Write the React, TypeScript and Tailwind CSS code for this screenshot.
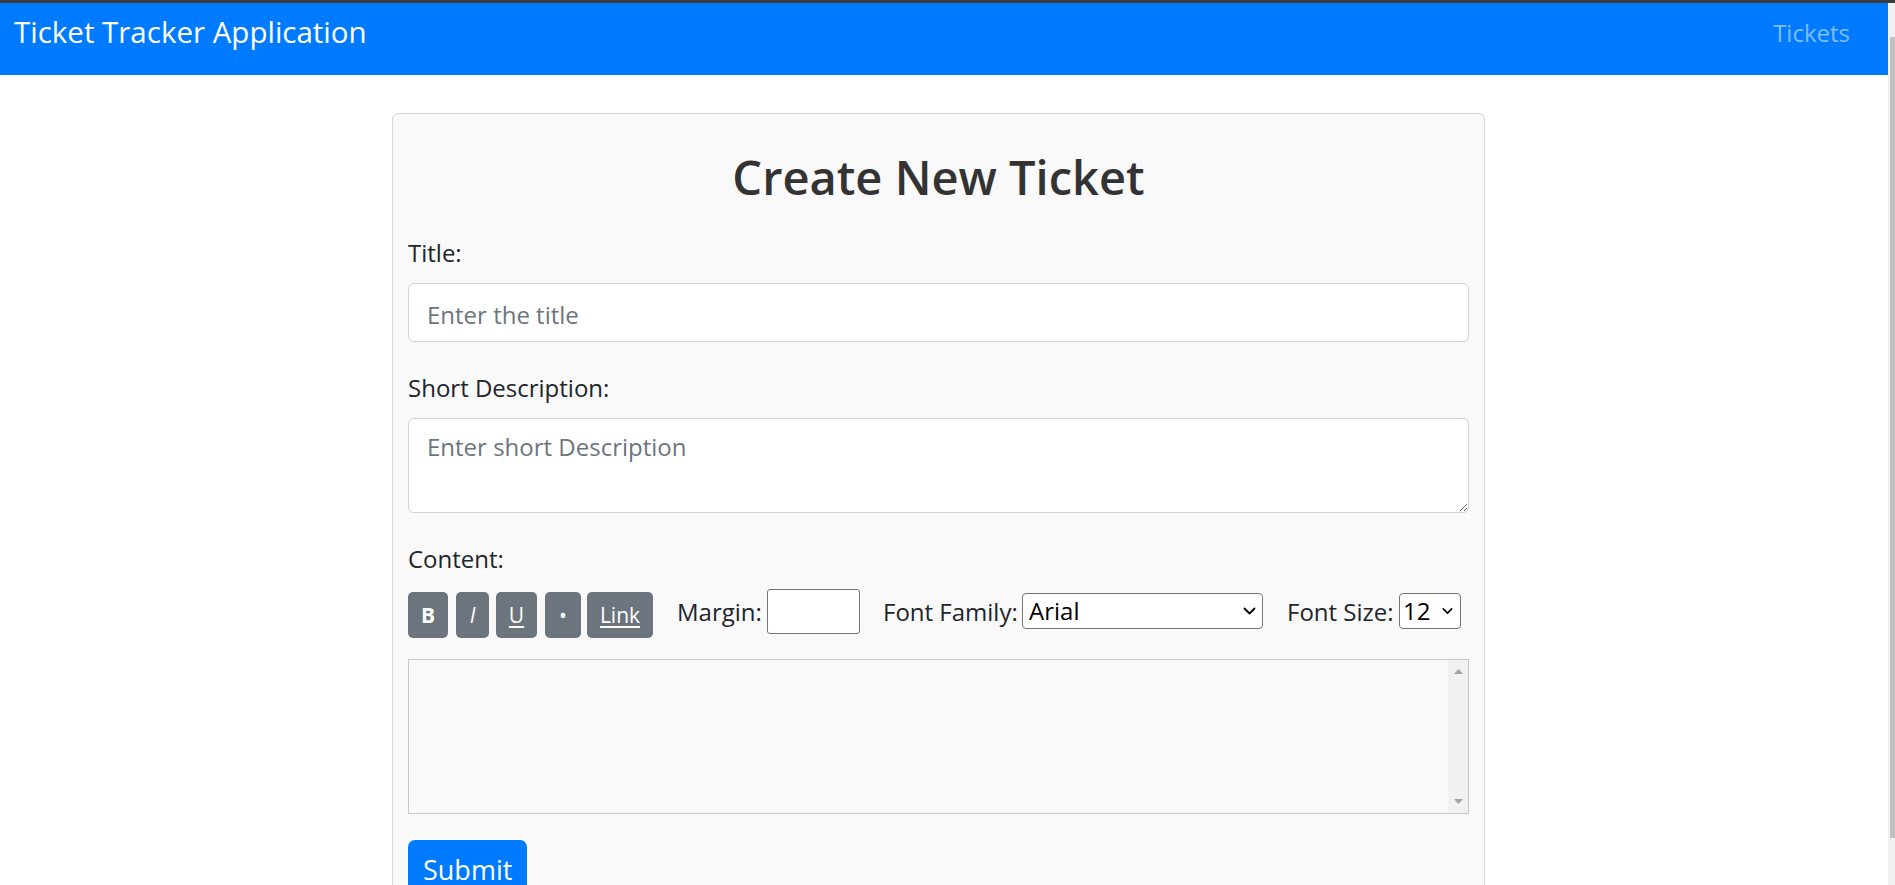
import React from "react";

function Chevron({ className }: { className: string }) {
  return (
    <svg className={className} width="13" height="8" viewBox="0 0 13 8" fill="none">
      <path d="M1.5 1.5 L6.5 6.5 L11.5 1.5" stroke="#000" strokeWidth="1.8" strokeLinecap="round" strokeLinejoin="round" />
    </svg>
  );
}

export default function App() {
  return (
    <div className="h-[885px] w-[1895px] overflow-hidden bg-white flex flex-col font-['Open_Sans',sans-serif] text-[#212529]">
      <div className="h-[3px] shrink-0 bg-[#3c3c3c]" />
      <div className="flex flex-1 min-h-0">
        <div className="w-[1888px] flex flex-col">
          <nav className="h-[72px] shrink-0 bg-[#007bff] flex justify-between items-start pl-[14px] pr-[38px]">
            <span className="mt-[6px] text-[29.5px] leading-[45px] text-white">Ticket Tracker Application</span>
            <a className="mt-[12px] text-[24px] leading-[36px] text-[#80bdff]">Tickets</a>
          </nav>
          <div className="pt-[38px]">
            <div className="ml-[392px] w-[1093px] rounded-[6px] border border-[#d6d6d6] bg-[#f9f9f9] px-[15px] pt-[34px] pb-[40px]">
              <h2 className="text-center text-[47px] leading-[58px] font-semibold text-[#333333]">Create New Ticket</h2>

              <label className="mt-[29px] block text-[24px] leading-[36px]">Title:</label>
              <input
                className="mt-[12px] block w-full h-[59px] rounded-[6px] border border-[#ced4da] bg-white px-[18px] pt-[3px] text-[24px] leading-[36px] placeholder:text-[#6c757d] outline-none"
                placeholder="Enter the title"
              />

              <label className="mt-[28px] block text-[24px] leading-[36px]">Short Description:</label>
              <textarea
                className="mt-[12px] block w-full h-[95px] rounded-[6px] border border-[#ced4da] bg-white px-[18px] pt-[10px] text-[24px] leading-[36px] placeholder:text-[#6c757d] outline-none"
                placeholder="Enter short Description"
              />

              <label className="mt-[28px] block text-[24px] leading-[36px]">Content:</label>

              <div className="mt-[12px] flex items-start">
                <button className="mt-[3px] h-[46px] w-[40px] rounded-[5px] bg-[#6c757d] text-white text-[21px] leading-[32px] font-bold">B</button>
                <button className="ml-[8px] mt-[3px] h-[46px] w-[33px] rounded-[5px] bg-[#6c757d] text-white text-[21px] leading-[32px] italic">I</button>
                <button className="ml-[7px] mt-[3px] h-[46px] w-[41px] rounded-[5px] bg-[#6c757d] text-white text-[21px] leading-[32px] underline underline-offset-[3px]">U</button>
                <button className="ml-[8px] mt-[3px] h-[46px] w-[36px] rounded-[5px] bg-[#6c757d] text-white text-[21px] leading-[32px]">•</button>
                <button className="ml-[6px] mt-[3px] h-[46px] w-[66px] rounded-[5px] bg-[#6c757d] text-white text-[21px] leading-[32px] underline underline-offset-[3px]">Link</button>

                <span className="ml-[24px] mt-[5px] w-[90px] text-[24px] leading-[36px]">Margin:</span>
                <input className="h-[45px] w-[93px] rounded-[3px] border border-[#767676] bg-white outline-none" />

                <span className="ml-[23px] mt-[5px] w-[139px] text-[24px] leading-[36px]">Font Family:</span>
                <div className="relative mt-[4px]">
                  <select className="appearance-none block h-[36px] w-[241px] rounded-[4px] border border-[#767676] bg-white pl-[6px] text-[24px] leading-[32px] text-black outline-none">
                    <option>Arial</option>
                  </select>
                  <Chevron className="pointer-events-none absolute right-[7px] top-[14px]" />
                </div>

                <span className="ml-[24px] mt-[5px] w-[112px] text-[24px] leading-[36px]">Font Size:</span>
                <div className="relative mt-[4px]">
                  <select className="appearance-none block h-[36px] w-[62px] rounded-[4px] border border-[#767676] bg-white pl-[3px] text-[24px] leading-[32px] text-black outline-none">
                    <option>12</option>
                  </select>
                  <Chevron className="pointer-events-none absolute right-[8px] top-[14px] w-[11px]" />
                </div>
              </div>

              <div className="mt-[21px] h-[155px] border border-[#c8c8c8] bg-[#f9f9f9] flex">
                <div className="flex-1" />
                <div className="w-[20px] bg-[#f1f1f1] flex flex-col items-center justify-between pt-[9px] pb-[9px]">
                  <svg width="9" height="5" viewBox="0 0 9 5"><path d="M4.5 0 L9 5 L0 5 Z" fill="#a3a3a3" /></svg>
                  <svg width="9" height="5" viewBox="0 0 9 5"><path d="M0 0 L9 0 L4.5 5 Z" fill="#a3a3a3" /></svg>
                </div>
              </div>

              <button className="mt-[26px] rounded-[7px] bg-[#007bff] text-white text-[27px] leading-[40px] px-[15px] pt-[10px] pb-[8px]">Submit</button>
            </div>
          </div>
        </div>
        <div className="w-[7px] bg-[#f1f1f1] pl-[2px]">
          <div className="mt-[34px] h-[801px] bg-[#c1c1c1]" />
        </div>
      </div>
    </div>
  );
}
